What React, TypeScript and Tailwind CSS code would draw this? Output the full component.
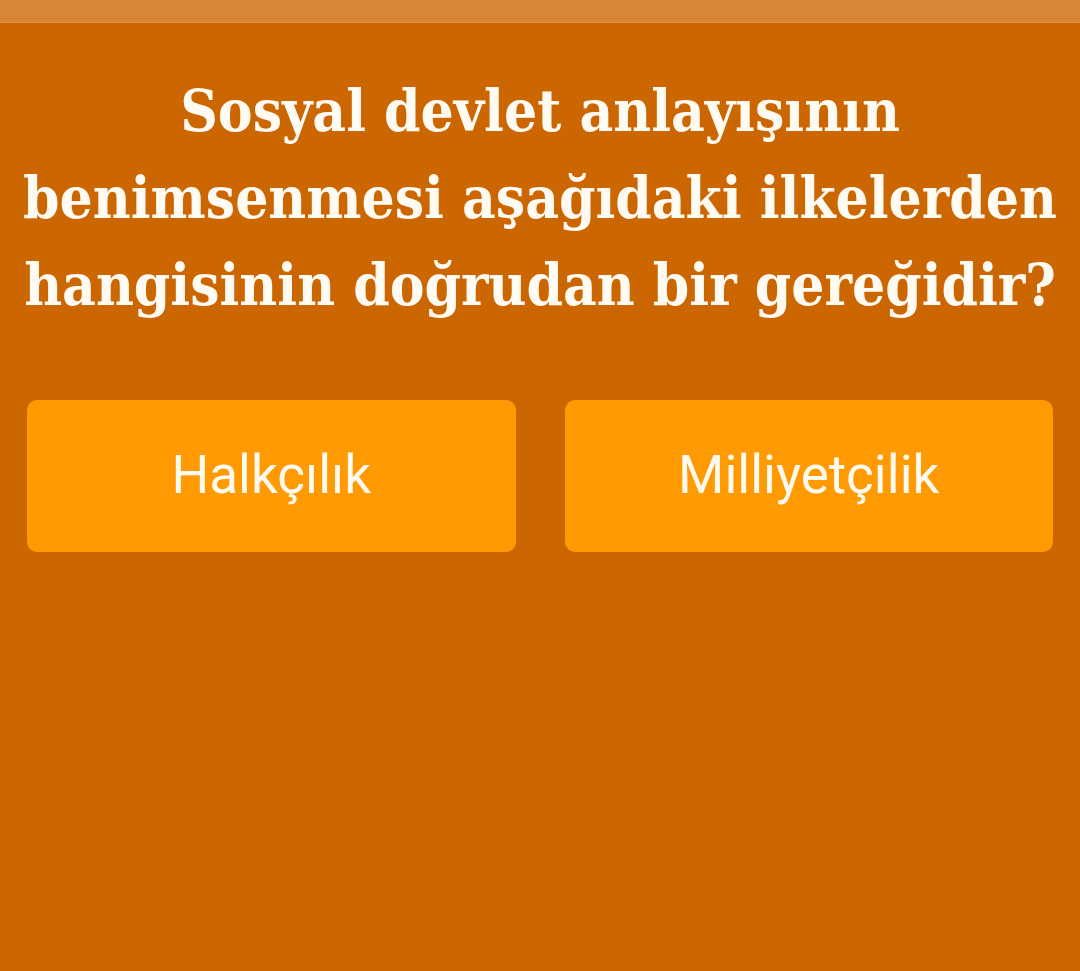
import React from 'react';

const question = ['Sosyal devlet anlayışının', 'benimsenmesi aşağıdaki ilkelerden', 'hangisinin doğrudan bir gereğidir?'];
const answers = ['Halkçılık', 'Milliyetçilik'];

export default function App() {
  return (
    <div className="w-[1080px] h-[971px] bg-[#cc6600] flex flex-col overflow-hidden">
      {/* status strip */}
      <div className="h-[23px] bg-[#d78635] border-b border-[#de9038]" />

      {/* question */}
      <h1 className="mt-[45px] text-center whitespace-nowrap text-[#fffaf2] font-bold text-[58px] leading-[87px] [font-family:'DejaVu_Serif_Condensed','DejaVu_Serif',serif]">
        {question.map((line) => (
          <div key={line}>{line}</div>
        ))}
      </h1>

      {/* answer buttons */}
      <div className="mt-[71px] px-[27px] grid grid-cols-2 gap-[49px]">
        {answers.map((a) => (
          <button
            key={a}
            className="h-[152px] rounded-[10px] bg-[#ff9a02] text-[#fffaf0] text-[53px] [font-family:Roboto,sans-serif] flex items-center justify-center"
          >
            {a}
          </button>
        ))}
      </div>
    </div>
  );
}
